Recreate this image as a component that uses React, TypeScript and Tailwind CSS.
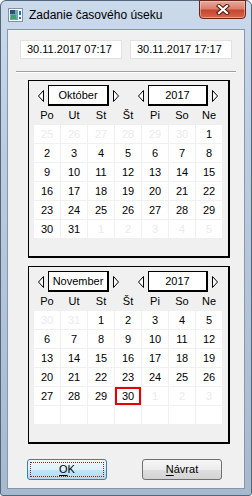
import React from "react";

type Day = { n?: number; muted?: boolean; selected?: boolean };

const range = (a: number, b: number) => Array.from({ length: b - a + 1 }, (_, i) => a + i);

const october: Day[] = [
  ...[25, 26, 27, 28, 29, 30].map((n) => ({ n, muted: true })),
  ...range(1, 31).map((n) => ({ n })),
  ...range(1, 5).map((n) => ({ n, muted: true })),
];

const november: Day[] = [
  ...[30, 31].map((n) => ({ n, muted: true })),
  ...range(1, 30).map((n) => ({ n, selected: n === 30 })),
  ...range(1, 3).map((n) => ({ n, muted: true })),
  ...range(1, 7).map(() => ({})),
];

const weekDays = ["Po", "Ut", "St", "Št", "Pi", "So", "Ne"];

function NavArrow({ dir }: { dir: "left" | "right" }) {
  const points = dir === "left" ? "9.5,5.5 4.5,11 9.5,16.5" : "4.5,5.5 9.5,11 4.5,16.5";
  return (
    <svg width="14" height="21" viewBox="0 0 14 21" className="shrink-0">
      <polygon points={points} fill="white" stroke="black" strokeWidth="1" />
    </svg>
  );
}

function NavBox({ label, width }: { label: string; width: string }) {
  return (
    <div
      className={`flex h-[21px] ${width} items-center justify-center border-t border-l border-r-2 border-b-2 border-black bg-white text-[11px]`}
    >
      {label}
    </div>
  );
}

function Calendar({ month, year, days }: { month: string; year: string; days: Day[] }) {
  return (
    <div className="ml-[20px] w-[202px] border-t border-l border-r-2 border-b-2 border-black bg-[#f0f0f0] pl-[5px] pr-[6px] pt-[4px] pb-[18px]">
      <div className="flex w-[188px] items-center justify-between">
        <div className="flex items-center">
          <NavArrow dir="left" />
          <NavBox label={month} width="w-[61px]" />
          <NavArrow dir="right" />
        </div>
        <div className="flex items-center">
          <NavArrow dir="left" />
          <NavBox label={year} width="w-[60px]" />
          <NavArrow dir="right" />
        </div>
      </div>
      <div className="grid h-[19px] grid-cols-[repeat(7,26px)] gap-x-px">
        {weekDays.map((d) => (
          <div key={d} className="flex items-center justify-center text-[11px]">
            {d}
          </div>
        ))}
      </div>
      <div className="grid grid-cols-[repeat(7,26px)] auto-rows-[18px] gap-px">
        {days.map((d, i) => (
          <div
            key={i}
            className={`flex items-center justify-center bg-white text-[11px] ${
              d.muted ? "text-[#ebebeb]" : "text-black"
            } ${d.selected ? "border-2 border-[#e60000]" : ""}`}
          >
            {d.n ?? ""}
          </div>
        ))}
      </div>
    </div>
  );
}

function TitleIcon() {
  return (
    <svg width="15" height="14" viewBox="0 0 15 14" className="shrink-0">
      <rect x="0.5" y="0.5" width="14" height="13" fill="#f4f7fb" stroke="#8391a3" />
      <rect x="2" y="2" width="8" height="10" fill="#6fa9b4" />
      <rect x="2" y="2" width="5" height="4" fill="#2d4f7c" />
      <rect x="3" y="7" width="5" height="4" fill="#39a36b" />
      <rect x="11" y="3" width="2" height="4" fill="#2f6fb8" />
      <rect x="11" y="9" width="2" height="2" fill="#2f6fb8" />
    </svg>
  );
}

function CloseButton() {
  return (
    <div className="-mt-px ml-auto mr-[5px] flex h-[19px] w-[47px] items-center justify-center self-start rounded-b-[4px] border border-[#6a2419] bg-[linear-gradient(to_bottom,#e8a99b_0%,#d97f6c_45%,#c8452d_55%,#d6664d_100%)] shadow-[inset_0_0_0_1px_rgba(255,210,200,0.5)]">
      <svg width="14" height="11" viewBox="0 0 14 11">
        <path d="M3 2 L11 9 M11 2 L3 9" stroke="#4b1d16" strokeWidth="4.2" strokeLinecap="square" />
        <path d="M3 2 L11 9 M11 2 L3 9" stroke="white" strokeWidth="2.2" strokeLinecap="square" />
      </svg>
    </div>
  );
}

function DateBox({ value }: { value: string }) {
  return (
    <div className="flex h-[19px] w-[102px] items-center border border-[#e2e2e2] bg-white pl-[6px] text-[11px]">
      {value}
    </div>
  );
}

export default function App() {
  return (
    <div className="flex h-[496px] w-[252px] flex-col rounded-t-[6px] rounded-b-[3px] border border-[#52667c] bg-[linear-gradient(to_bottom,#cbdaeb_0%,#bccde0_30%,#a7b9ce_100%)] font-['Liberation_Sans',Arial,sans-serif] text-black">
      <div className="flex h-[28px] items-center">
        <div className="ml-[7px]">
          <TitleIcon />
        </div>
        <span className="ml-[6px] text-[12px]">Zadanie časového úseku</span>
        <CloseButton />
      </div>
      <div className="mx-[6px] mb-[6px] flex flex-1 flex-col border border-[#8598ae] bg-[#f0f0f0] pt-[10px]">
        <div className="flex gap-[8px] pl-[12px]">
          <DateBox value="30.11.2017 07:17" />
          <DateBox value="30.11.2017 17:17" />
        </div>
        <div className="mx-[8px] mt-[12px] h-[2px] border-t border-b border-t-[#a0a0a0] border-b-white" />
        <div className="mt-[7px]">
          <Calendar month="Október" year="2017" days={october} />
        </div>
        <div className="mt-[8px]">
          <Calendar month="November" year="2017" days={november} />
        </div>
        <div className="mt-[15px] flex">
          <button className="ml-[19px] h-[21px] w-[80px] rounded-[3px] border border-[#3c7fb1] bg-[linear-gradient(to_bottom,#eef8fe_0%,#dcf1fc_50%,#c3e7fb_50%,#acdcf6_100%)] p-[2px] text-[11px]">
            <span className="flex h-full w-full items-center justify-center border border-dotted border-[#7a2a1a]">
              <span className="underline underline-offset-2">O</span>K
            </span>
          </button>
          <button className="ml-[35px] flex h-[21px] w-[80px] items-center justify-center rounded-[3px] border border-[#707070] bg-[linear-gradient(to_bottom,#f6f6f6_0%,#ececec_50%,#dfdfdf_50%,#d3d3d3_100%)] text-[11px]">
            <span className="underline underline-offset-2">N</span>ávrat
          </button>
        </div>
      </div>
    </div>
  );
}
